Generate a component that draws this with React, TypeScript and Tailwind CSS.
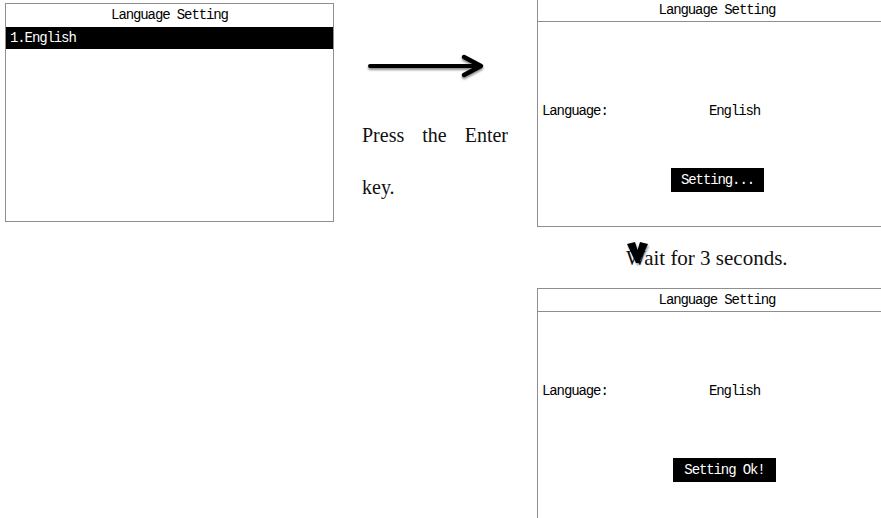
import React from "react";

// LCD screen font: narrow monospace look of the device display
const lcd = "font-['Liberation_Mono',monospace] text-[14px] tracking-[-1.1px] text-black";
const doc = "font-['Liberation_Serif','Times_New_Roman',serif] text-[20px] text-[#111]";

function RightArrow() {
  return (
    <svg width="122" height="28" viewBox="0 0 122 28" className="ml-[3px]">
      <defs>
        <filter id="soft" x="-10%" y="-50%" width="120%" height="200%">
          <feGaussianBlur in="SourceAlpha" stdDeviation="1.2" />
          <feOffset dx="0" dy="1.5" result="b" />
          <feComponentTransfer>
            <feFuncA type="linear" slope="0.45" />
          </feComponentTransfer>
          <feMerge>
            <feMergeNode />
            <feMergeNode in="SourceGraphic" />
          </feMerge>
        </filter>
      </defs>
      <g filter="url(#soft)" stroke="#000" strokeLinecap="round" strokeLinejoin="round" fill="none">
        <line x1="5" y1="13" x2="114" y2="13" strokeWidth="4" />
        <polyline points="99,4 116,13 99,22" strokeWidth="4.5" />
      </g>
    </svg>
  );
}

function DownChevron() {
  return (
    <svg width="24" height="26" viewBox="0 0 24 26" className="absolute left-[1px] top-[-4px]">
      <defs>
        <filter id="soft2" x="-30%" y="-30%" width="160%" height="160%">
          <feGaussianBlur in="SourceAlpha" stdDeviation="1" />
          <feOffset dx="1" dy="1.5" result="b" />
          <feComponentTransfer>
            <feFuncA type="linear" slope="0.4" />
          </feComponentTransfer>
          <feMerge>
            <feMergeNode />
            <feMergeNode in="SourceGraphic" />
          </feMerge>
        </filter>
      </defs>
      <polygon
        filter="url(#soft2)"
        points="0,2 8,0 10.5,8 13,0 21,2 12,21 9,21"
        fill="#000"
      />
    </svg>
  );
}

function ScreenTitle() {
  return (
    <div className="h-[23px] flex items-center justify-center border-b border-[#8e8e8e] shrink-0">
      Language Setting
    </div>
  );
}

function ResultScreen({
  className,
  gapTop,
  gapMid,
  status,
  boxOffset,
  boxWidth,
}: {
  className: string;
  gapTop: string;
  gapMid: string;
  status: string;
  boxOffset: string;
  boxWidth: string;
}) {
  return (
    <div className={`${lcd} border border-[#8e8e8e] flex flex-col w-[360px] ${className}`}>
      <ScreenTitle />
      <div className={`flex items-center h-[20px] pl-[4px] ${gapTop}`}>
        <span className="w-[167px]">Language:</span>
        <span>English</span>
      </div>
      <div
        className={`h-[24px] bg-black text-white flex items-center justify-center ${gapMid} ${boxOffset} ${boxWidth}`}
      >
        {status}
      </div>
    </div>
  );
}

export default function App() {
  return (
    <div className="w-[881px] h-[518px] overflow-hidden bg-white flex items-start">
      {/* Menu screen */}
      <div className={`${lcd} ml-[5px] mt-[3px] w-[329px] h-[219px] border border-[#8e8e8e] flex flex-col shrink-0`}>
        <div className="h-[23px] flex items-center justify-center">Language Setting</div>
        <div className="h-[22px] bg-black text-white flex items-center pl-[4px]">1.English</div>
      </div>

      {/* Instruction */}
      <div className="ml-[28px] w-[146px] flex flex-col shrink-0">
        <div className="mt-[53px]">
          <RightArrow />
        </div>
        <p className={`${doc} mt-[28px] leading-[52px] text-justify`}>Press the Enter key.</p>
      </div>

      {/* Result screens */}
      <div className="ml-[29px] flex flex-col shrink-0 -mt-[2px]">
        <ResultScreen
          className="h-[229px]"
          gapTop="mt-[79px]"
          gapMid="mt-[47px]"
          status="Setting..."
          boxOffset="ml-[133px]"
          boxWidth="w-[93px]"
        />
        <div className="h-[61px] flex items-center">
          <div className={`${doc} text-[21px] relative ml-[89px] leading-[24px]`}>
            <DownChevron />
            Wait for 3 seconds.
          </div>
        </div>
        <ResultScreen
          className="h-[240px]"
          gapTop="mt-[69px]"
          gapMid="mt-[57px]"
          status="Setting Ok!"
          boxOffset="ml-[135px]"
          boxWidth="w-[103px]"
        />
      </div>
    </div>
  );
}
